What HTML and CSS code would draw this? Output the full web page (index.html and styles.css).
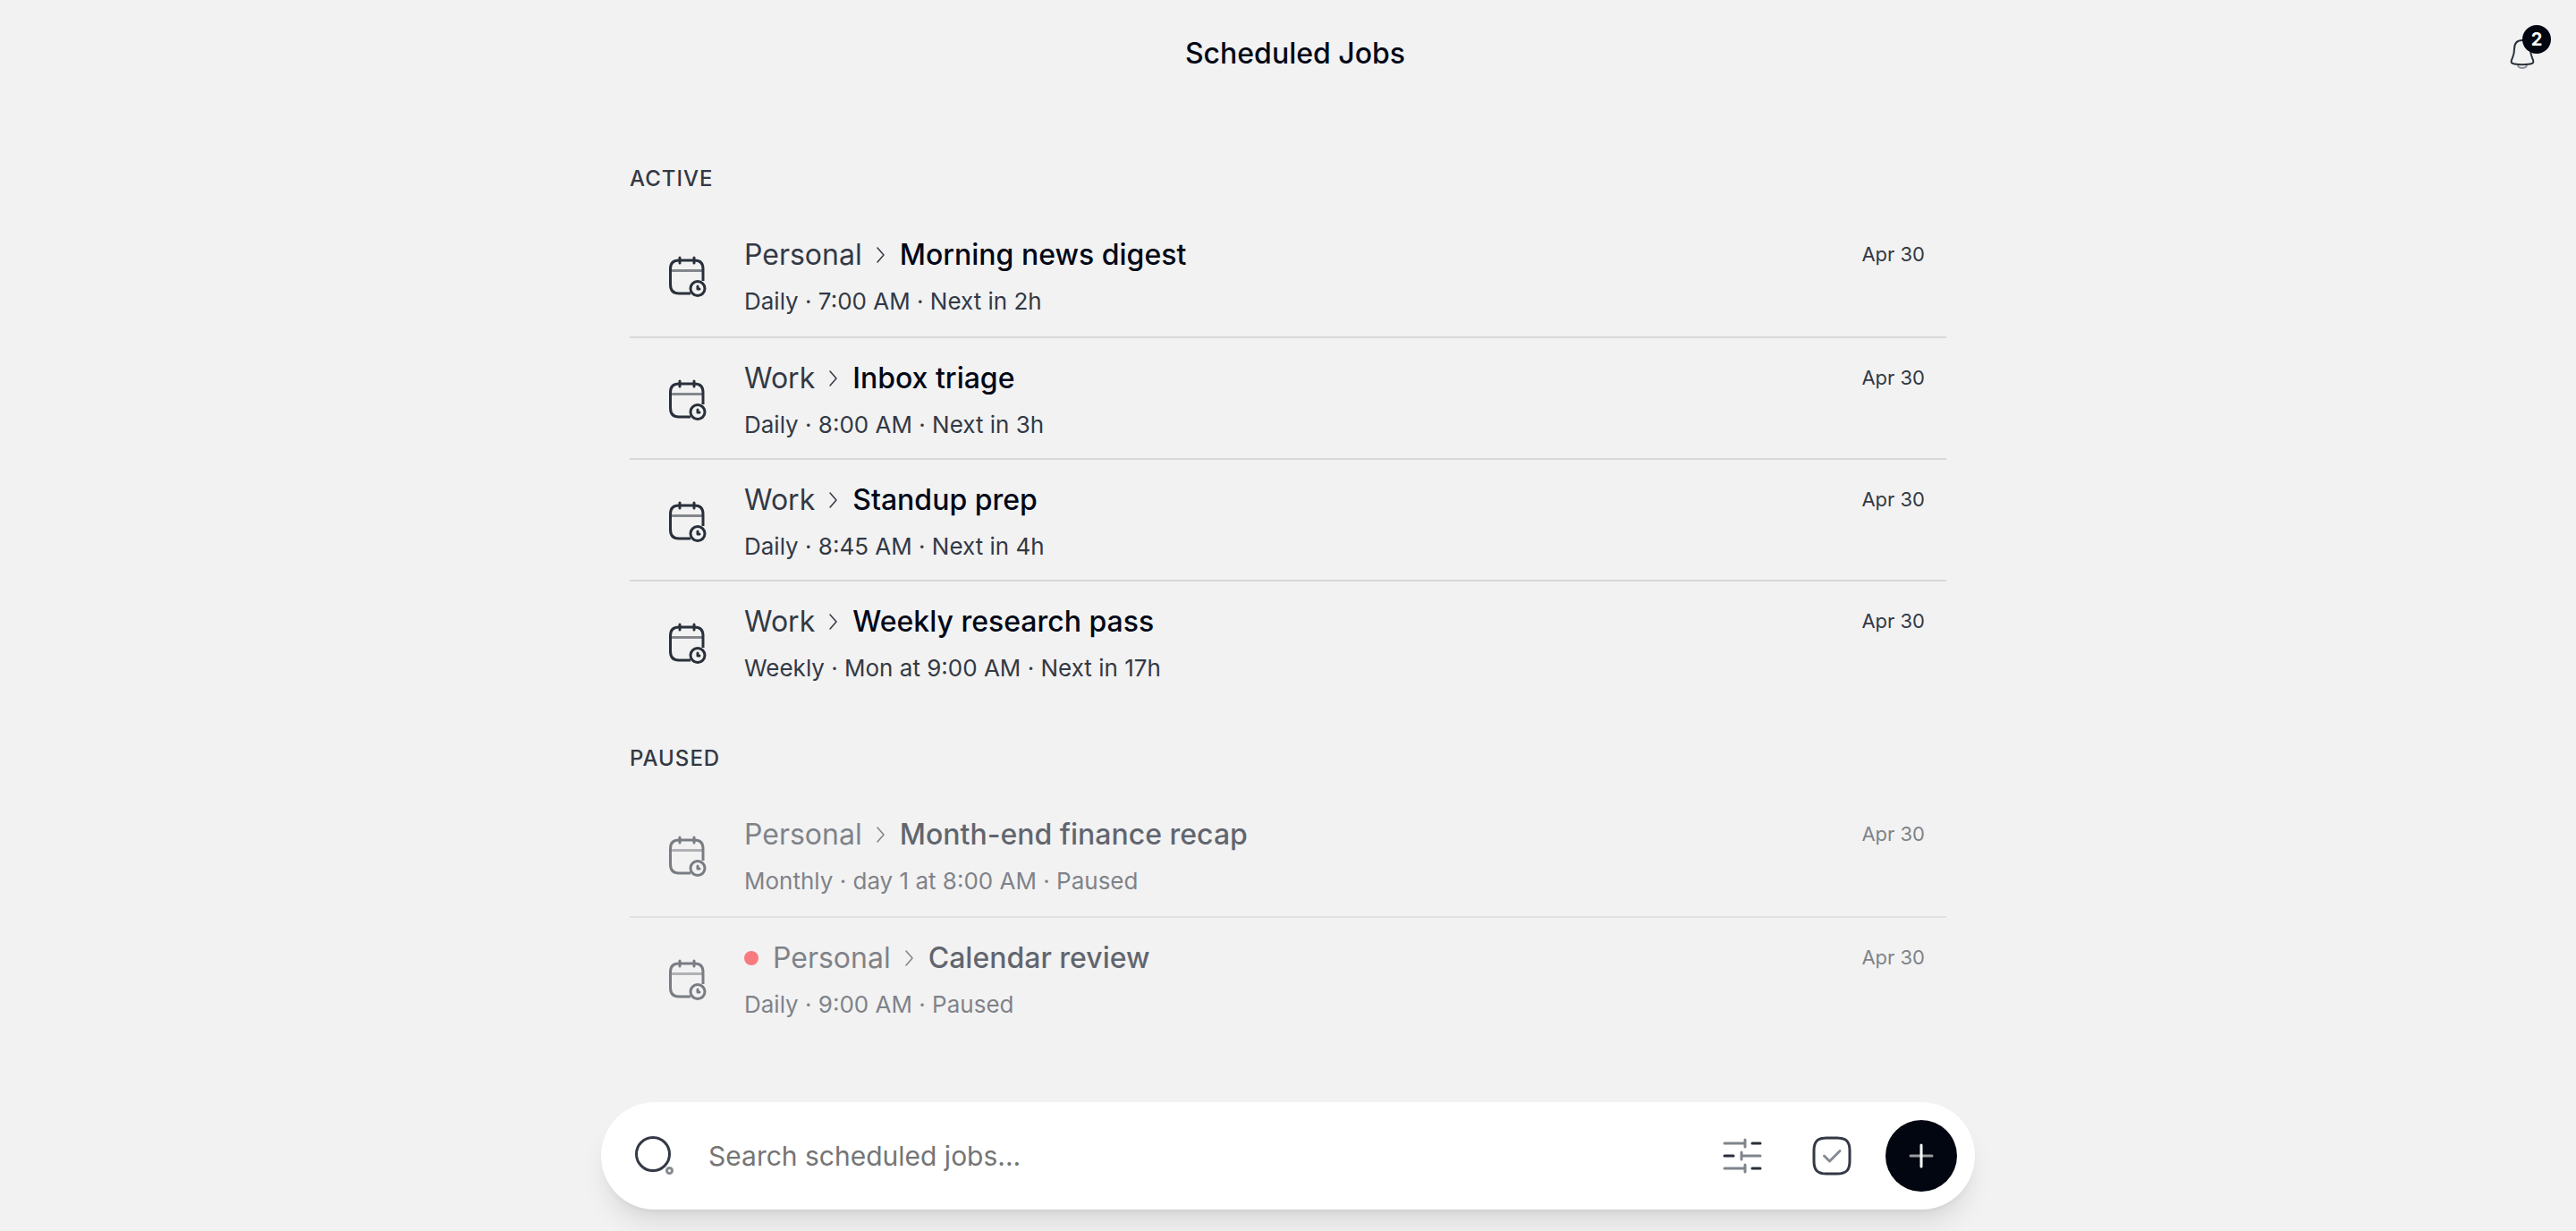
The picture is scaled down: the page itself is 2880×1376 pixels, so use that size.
FILE: index.html
```
<!DOCTYPE html>
<html lang="en">
<head>
    <meta charset="UTF-8">
    <title>Scheduled Jobs</title>
    <link rel="stylesheet" href="styles.css">
</head>
<body>
    <!--icons shared by the rows-->
    <svg class="sprite">
        <symbol id="calendar" viewBox="0 0 48 48">
            <path d="M28 42H15C8.500 42 5.500 39 5.500 32V14.500C5.500 8 8.500 5 15 5H32.500C39 5 42 8 42 14.500V28" fill="none" stroke="currentColor" stroke-width="3"/>
            <path d="M7 16.500H41" stroke="currentColor" stroke-width="3" opacity=".55"/>
            <path d="M16 2V8M32 2V8" stroke="currentColor" stroke-width="3" stroke-linecap="round"/>
            <circle cx="36" cy="36.500" r="8" fill="none" stroke="currentColor" stroke-width="3"/>
            <path d="M36 34V37H38" fill="none" stroke="currentColor" stroke-width="3" stroke-linecap="round" stroke-linejoin="round"/>
        </symbol>
        <symbol id="chevron" viewBox="0 0 12 20">
            <path d="M3 2L10 10L3 18" fill="none" stroke="currentColor" stroke-width="1.500" stroke-linecap="round" stroke-linejoin="round"/>
        </symbol>
    </svg>

    <header class="header">
        <h1>Scheduled Jobs</h1>
        <button class="bell" aria-label="Notifications">
            <svg viewBox="0 0 28 34" width="28" height="34">
                <path d="M14 2C8 2 5 6 5 12C5 19 3 21 2 24C1 27 2 28 5 28.500C11 29.500 17 29.500 23 28.500C26 28 27 27 26 24C25 21 23 19 23 12C23 6 20 2 14 2Z" fill="none" stroke="#29303b" stroke-width="2"/>
                <path d="M9 30C10 34 18 34 19 30" fill="none" stroke="#29303b" stroke-width="2" opacity=".5"/>
            </svg>
            <span class="badge">2</span>
        </button>
    </header>

    <main class="main">
        <section>
            <h2>Active</h2>
            <ul class="jobs">
                <li class="job">
                    <svg class="cal"><use href="#calendar"/></svg>
                    <div class="info">
                        <p class="name">Personal <svg class="chev"><use href="#chevron"/></svg> <b>Morning news digest</b></p>
                        <p class="when">Daily · 7:00 AM · Next in 2h</p>
                    </div>
                    <time>Apr 30</time>
                </li>
                <li class="job">
                    <svg class="cal"><use href="#calendar"/></svg>
                    <div class="info">
                        <p class="name">Work <svg class="chev"><use href="#chevron"/></svg> <b>Inbox triage</b></p>
                        <p class="when">Daily · 8:00 AM · Next in 3h</p>
                    </div>
                    <time>Apr 30</time>
                </li>
                <li class="job">
                    <svg class="cal"><use href="#calendar"/></svg>
                    <div class="info">
                        <p class="name">Work <svg class="chev"><use href="#chevron"/></svg> <b>Standup prep</b></p>
                        <p class="when">Daily · 8:45 AM · Next in 4h</p>
                    </div>
                    <time>Apr 30</time>
                </li>
                <li class="job">
                    <svg class="cal"><use href="#calendar"/></svg>
                    <div class="info">
                        <p class="name">Work <svg class="chev"><use href="#chevron"/></svg> <b>Weekly research pass</b></p>
                        <p class="when">Weekly · Mon at 9:00 AM · Next in 17h</p>
                    </div>
                    <time>Apr 30</time>
                </li>
            </ul>
        </section>

        <section>
            <h2>Paused</h2>
            <ul class="jobs paused">
                <li class="job">
                    <svg class="cal"><use href="#calendar"/></svg>
                    <div class="info">
                        <p class="name">Personal <svg class="chev"><use href="#chevron"/></svg> <b>Month-end finance recap</b></p>
                        <p class="when">Monthly · day 1 at 8:00 AM · Paused</p>
                    </div>
                    <time>Apr 30</time>
                </li>
                <li class="job">
                    <svg class="cal"><use href="#calendar"/></svg>
                    <div class="info">
                        <p class="name"><span class="dot"></span>Personal <svg class="chev"><use href="#chevron"/></svg> <b>Calendar review</b></p>
                        <p class="when">Daily · 9:00 AM · Paused</p>
                    </div>
                    <time>Apr 30</time>
                </li>
            </ul>
        </section>
    </main>

    <form class="search">
        <svg class="glass" viewBox="0 0 48 48" width="48" height="48">
            <circle cx="22" cy="22" r="18.500" fill="none" stroke="#333945" stroke-width="3"/>
            <circle cx="40.500" cy="40.500" r="3" fill="none" stroke="#868b92" stroke-width="3"/>
        </svg>
        <input type="text" placeholder="Search scheduled jobs..." aria-label="Search scheduled jobs">
        <button type="button" class="tool" aria-label="Filters">
            <svg viewBox="0 0 48 48" width="48" height="48" fill="none" stroke-width="3" stroke-linecap="round">
                <path d="M4 10H27M27 6V14M23 24H44M23 20V28M4 38H27M27 34V42" stroke="#80858d"/>
                <path d="M35 10H44M4 24H14M35 38H44" stroke="#29303b"/>
            </svg>
        </button>
        <button type="button" class="tool" aria-label="Select">
            <svg viewBox="0 0 48 48" width="48" height="48" fill="none" stroke-width="3" stroke-linecap="round" stroke-linejoin="round">
                <path d="M18 4H30C40 4 44 8 44 18V30C44 40 40 44 30 44H18C8 44 4 40 4 30V18C4 8 8 4 18 4Z" stroke="#333945"/>
                <path d="M15.500 24L21.500 30L33 18.500" stroke="#868b92"/>
            </svg>
        </button>
        <button type="button" class="add" aria-label="New job">
            <svg viewBox="0 0 32 32" width="32" height="32" fill="none" stroke="#fff" stroke-width="3" stroke-linecap="round">
                <path d="M4 16H28" opacity=".6"/>
                <path d="M16 4V28"/>
            </svg>
        </button>
    </form>
</body>
</html>
```
FILE: styles.css
```
*{
    box-sizing: border-box;
}
body{
    margin: 0;
    background-color: #f2f2f2;
    color: #333945;
    font-family: Inter, sans-serif;
    min-height: 100vh;
    display: flex;
    flex-direction: column;
}
h1, h2, p, ul{
    margin: 0;
    padding: 0;
}
button{
    border: 0;
    padding: 0;
    background: none;
    font-family: inherit;
    cursor: pointer;
}
.sprite{
    display: none;
}
.header{
    display: grid;
    grid-template-columns: 1fr auto 1fr;
    align-items: center;
    height: 120px;
    padding: 0 46px 0 62px;
}
h1{
    grid-column: 2;
    color: #020817;
    font-size: 32px;
    line-height: 48px;
    font-weight: 500;
}
.bell{
    position: relative;
    justify-self: end;
    width: 28px;
    height: 34px;
}
.bell svg{
    display: block;
}
.badge{
    position: absolute;
    left: 14px;
    top: -15px;
    width: 32px;
    height: 32px;
    border-radius: 50%;
    background-color: #010610;
    color: white;
    font-size: 20px;
    line-height: 32px;
    font-weight: 700;
}
.main{
    width: 100%;
    max-width: 1536px;
    margin: 0 auto;
    padding: 64px 32px 0;
    flex: 1;
}
h2{
    font-size: 24px;
    line-height: 32px;
    font-weight: 500;
    letter-spacing: 1px;
    text-transform: uppercase;
}
.jobs{
    list-style: none;
    padding: 24px 0 48px;
}
.job{
    display: flex;
    align-items: flex-start;
    min-height: 136px;
    padding: 0 24px 0 40px;
}
.job + .job{
    border-top: 2px solid #d8d8d8;
}
.cal{
    width: 48px;
    height: 48px;
    margin: 46px 40px 0 0;
    color: #29303b;
}
.info{
    flex: 1;
    padding-top: 21px;
}
.name{
    display: flex;
    align-items: center;
    font-size: 32px;
    line-height: 48px;
}
.name b{
    color: #020817;
    font-weight: 500;
}
.chev{
    width: 12px;
    height: 20px;
    margin: 0 16px 0 14px;
}
.dot{
    width: 16px;
    height: 16px;
    margin-right: 16px;
    border-radius: 50%;
    background-color: #fb2c36;
}
.when{
    margin-top: 4px;
    font-size: 26px;
    line-height: 48px;
}
time{
    margin-top: 24px;
    font-size: 22px;
    line-height: 40px;
}
.paused .job > *{
    opacity: .6;
}
.paused .job + .job{
    border-top-color: #e2e2e2;
}
.search{
    position: sticky;
    bottom: 24px;
    display: flex;
    align-items: center;
    width: 100%;
    max-width: 1536px;
    height: 120px;
    margin: 0 auto 24px;
    padding: 0 20px 0 36px;
    border-radius: 60px;
    background-color: white;
    box-shadow: 0 20px 30px -6px rgba(0,0,0,.1), 0 8px 12px -8px rgba(0,0,0,.1);
}
.search input{
    flex: 1;
    min-width: 0;
    margin-left: 36px;
    padding: 0;
    border: 0;
    outline: 0;
    background: none;
    font-family: inherit;
    font-size: 30px;
    line-height: 48px;
}
.search input::placeholder{
    color: #757575;
}
.tool{
    width: 48px;
    height: 48px;
    margin-right: 52px;
}
.add{
    display: flex;
    align-items: center;
    justify-content: center;
    width: 80px;
    height: 80px;
    border-radius: 50%;
    background-color: #010610;
}
.tool + .add{
    margin-left: -16px;
}
```
